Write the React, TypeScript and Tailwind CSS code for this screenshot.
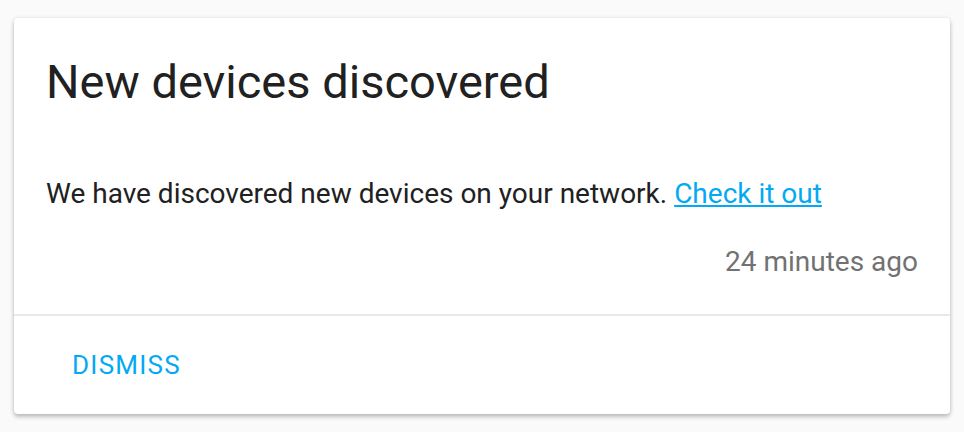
export default function App() {
  return (
    <div className="min-h-[432px] bg-[#fafafa] pt-[18px] px-[14px] font-['Roboto',sans-serif]">
      <div className="bg-white rounded-[4px] shadow-[0_3px_4px_rgba(0,0,0,0.22),0_0_4px_rgba(0,0,0,0.1)]">
        <div className="pt-8 px-8 text-[47px] leading-[64px] text-[#212121]">New devices discovered</div>
        <div className="px-8 pt-[60px] text-[28px] leading-[40px] text-[#212121]">
          We have discovered new devices on your network.{' '}
          <a href="#" className="text-[#03a9f4] underline">
            Check it out
          </a>
        </div>
        <div className="px-8 pt-[28px] pb-[32px] text-right text-[28px] leading-[40px] text-[#727272]">
          24 minutes ago
        </div>
        <div className="h-[2px] bg-[#e8e8e8]" />
        <div className="pl-[58px] py-[33px]">
          <button className="text-[26px] leading-[32px] tracking-[1.25px] text-[#03a9f4] uppercase">Dismiss</button>
        </div>
      </div>
    </div>
  );
}
